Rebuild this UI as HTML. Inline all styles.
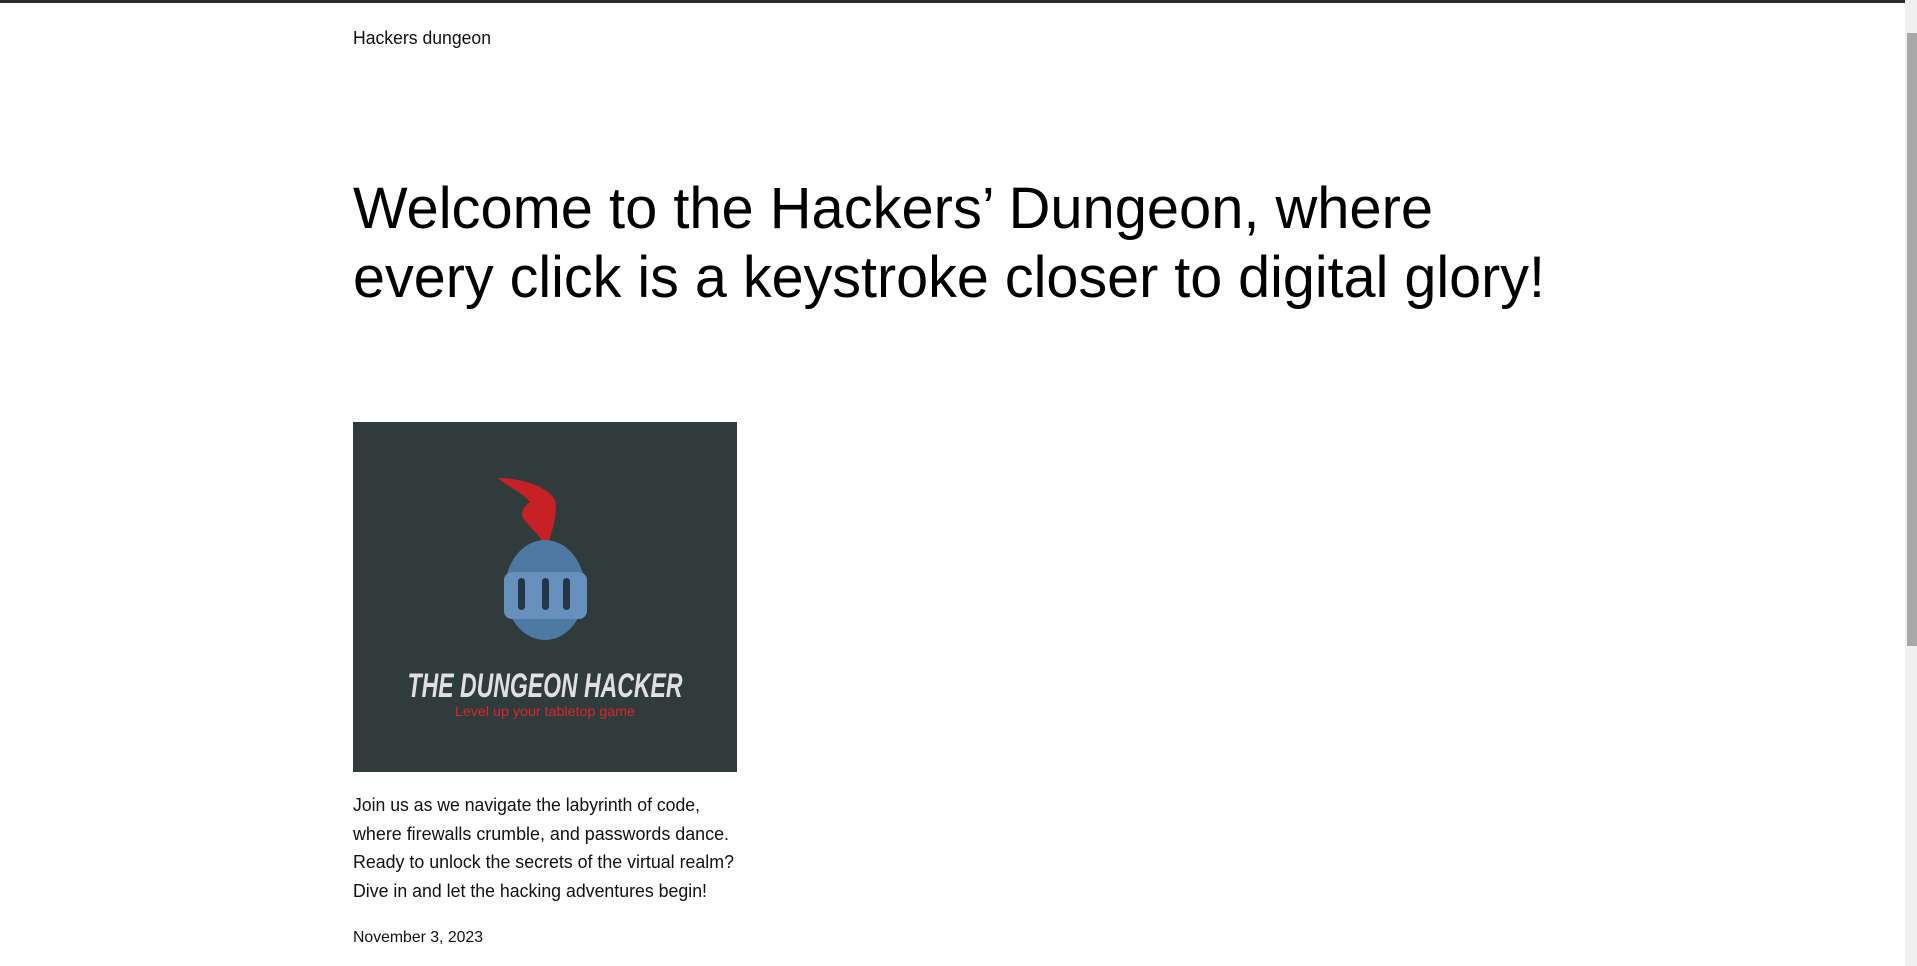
<!DOCTYPE html>
<html><head><meta charset="utf-8"><style>
html,body{margin:0;padding:0;background:#fff;overflow:hidden}
body{width:1917px;height:966px;position:relative;font-family:"Liberation Sans",sans-serif}
.top{position:absolute;left:0;top:0;width:1905px;height:3px;background:#2b2b2b}
.sb{position:absolute;left:1905px;top:0;width:12px;height:966px;background:#f0f0f0}
.th{position:absolute;left:2px;top:33px;width:10px;height:613px;background:#a8a8a8}
svg{position:absolute;left:0;top:0}
</style></head><body>
<div class="top"></div>
<svg width="1905" height="966" viewBox="0 0 1905 966">
<g font-family="Liberation Sans, sans-serif" fill="#111">
<text x="353" y="44" font-size="18" textLength="138" lengthAdjust="spacingAndGlyphs">Hackers dungeon</text>
<text x="353" y="228" font-size="58" fill="#000" textLength="1080" lengthAdjust="spacingAndGlyphs">Welcome to the Hackers’ Dungeon, where</text>
<text x="353" y="297" font-size="58" fill="#000" textLength="1192" lengthAdjust="spacingAndGlyphs">every click is a keystroke closer to digital glory!</text>
<text x="353" y="811" font-size="18" textLength="347" lengthAdjust="spacingAndGlyphs">Join us as we navigate the labyrinth of code,</text>
<text x="353" y="840" font-size="18" textLength="376" lengthAdjust="spacingAndGlyphs">where firewalls crumble, and passwords dance.</text>
<text x="353" y="868" font-size="18" textLength="381" lengthAdjust="spacingAndGlyphs">Ready to unlock the secrets of the virtual realm?</text>
<text x="353" y="897" font-size="18" textLength="354" lengthAdjust="spacingAndGlyphs">Dive in and let the hacking adventures begin!</text>
<text x="353" y="942" font-size="16" textLength="130" lengthAdjust="spacingAndGlyphs">November 3, 2023</text>
</g>
<rect x="353" y="422" width="384" height="350" fill="#303b3c"/>
<path d="M498 478 C520 478 548 486 555 500 C558 515 552 530 548 545 L544 545 C540 535 530 528 523 518 C520 512 525 505 530 502 C522 492 506 486 498 478 Z" fill="#c62124"/>
<ellipse cx="545" cy="590" rx="40" ry="50" fill="#4e79a3"/>
<rect x="504" y="572" width="83" height="47" rx="8" fill="#6790bd"/>
<rect x="518" y="578" width="7" height="32" rx="3.5" fill="#253649"/>
<rect x="542" y="578" width="7" height="32" rx="3.5" fill="#253649"/>
<rect x="563" y="578" width="7" height="32" rx="3.5" fill="#253649"/>
<text x="545" y="697" text-anchor="middle" font-family="Liberation Sans, sans-serif" font-weight="bold" font-style="italic" font-size="34" fill="#e0e0e0" textLength="275" lengthAdjust="spacingAndGlyphs">THE DUNGEON HACKER</text>
<text x="545" y="716" text-anchor="middle" font-family="Liberation Sans, sans-serif" font-size="14" fill="#d8262c" textLength="180" lengthAdjust="spacingAndGlyphs">Level up your tabletop game</text>
</svg>
<div class="sb"><div class="th"></div></div>
</body></html>
